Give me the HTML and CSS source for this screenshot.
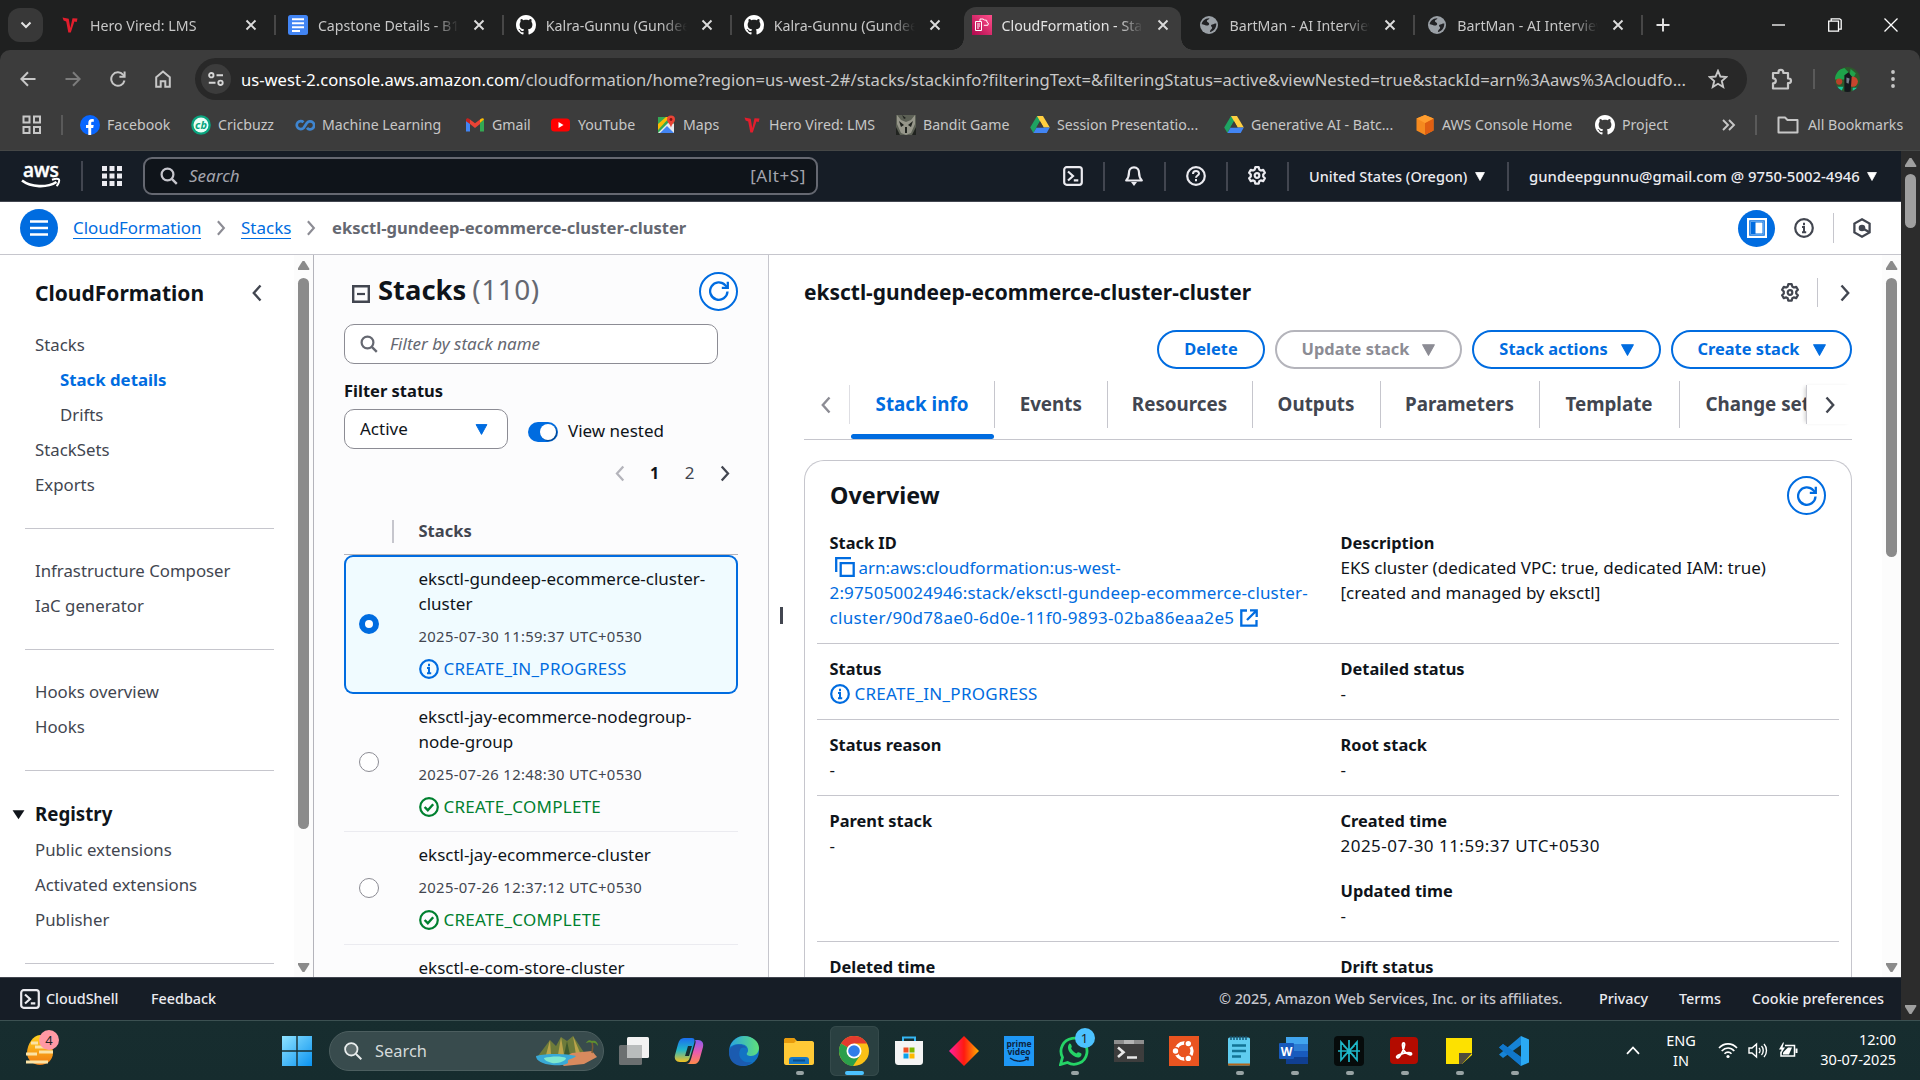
FILE: index.html
```html
<!DOCTYPE html>
<html lang="en">
<head>
<meta charset="utf-8">
<title>CloudFormation - Stack details</title>
<link rel="stylesheet" href="styles.css">
</head>
<body>
<svg class="defs" aria-hidden="true">
  <linearGradient id="g-cfn" x1="0" y1="1" x2="1" y2="0"><stop offset="0" stop-color="#b0084d"/><stop offset="1" stop-color="#ff4f8b"/></linearGradient>
  <linearGradient id="g-win" x1="0" y1="0" x2="1" y2="1"><stop offset="0" stop-color="#8fe3ff"/><stop offset="1" stop-color="#0a93f0"/></linearGradient>
  <linearGradient id="g-edge" x1="0" y1="0" x2="1" y2="0"><stop offset="0" stop-color="#2aa5e0"/><stop offset="1" stop-color="#5fe07a"/></linearGradient>
  <linearGradient id="g-egg" x1="0" y1="0" x2="0" y2="1"><stop offset="0" stop-color="#ffd21f"/><stop offset="1" stop-color="#f07a12"/></linearGradient>
  <linearGradient id="g-dia" x1="0" y1="0" x2="1" y2="0"><stop offset="0" stop-color="#ff1fa0"/><stop offset=".5" stop-color="#ff1a10"/><stop offset="1" stop-color="#ffb000"/></linearGradient>
  <linearGradient id="g-cop1" x1="0" y1="0" x2="0" y2="1"><stop offset="0" stop-color="#1a6df0"/><stop offset=".5" stop-color="#22b7c8"/><stop offset="1" stop-color="#f3c220"/></linearGradient>
  <linearGradient id="g-cop2" x1="0" y1="0" x2="0" y2="1"><stop offset="0" stop-color="#8a5cf0"/><stop offset=".5" stop-color="#e85bb0"/><stop offset="1" stop-color="#ff8a4a"/></linearGradient>
  <symbol id="x" viewBox="0 0 12 12"><path d="M1.5 1.5l9 9M10.5 1.5l-9 9" fill="none" stroke="currentColor" stroke-width="1.9"/></symbol>
  <symbol id="hero" viewBox="0 0 20 20"><path d="M2.5 2.6l6.2 1.2 1.6 9.2 2.2-9.8 5 .2-.8 3.6-2.3-.6-3.6 11.2H8.3L6.2 6.6 3.6 5.4z" fill="#e31e2d"/></symbol>
  <symbol id="docs" viewBox="0 0 20 20"><rect x="0" y="0" width="20" height="20" rx="2.5" fill="#4285f4"/><path d="M4 4.2h12M4 8.2h12M4 12.2h12M4 16h8" stroke="#fff" stroke-width="2"/></symbol>
  <symbol id="github" viewBox="0 0 16 16"><path fill="#fff" d="M8 0C3.58 0 0 3.58 0 8c0 3.54 2.29 6.53 5.47 7.59.4.07.55-.17.55-.38 0-.19-.01-.82-.01-1.49-2.01.37-2.53-.49-2.69-.94-.09-.23-.48-.94-.82-1.13-.28-.15-.68-.52-.01-.53.63-.01 1.08.58 1.23.82.72 1.21 1.87.87 2.33.66.07-.52.28-.87.51-1.07-1.78-.2-3.64-.89-3.64-3.95 0-.87.31-1.59.82-2.15-.08-.2-.36-1.02.08-2.12 0 0 .67-.21 2.2.82.64-.18 1.32-.27 2-.27s1.36.09 2 .27c1.53-1.04 2.2-.82 2.2-.82.44 1.1.16 1.92.08 2.12.51.56.82 1.27.82 2.15 0 3.07-1.87 3.75-3.65 3.95.29.25.54.73.54 1.48 0 1.07-.01 1.93-.01 2.2 0 .21.15.46.55.38A8.01 8.01 0 0 0 16 8c0-4.42-3.58-8-8-8z"/></symbol>
  <symbol id="globe" viewBox="0 0 20 20"><circle cx="10" cy="10" r="9" fill="#9aa0a6"/><path d="M10.5 3.2c-.6 1.6-2.6 1.2-2.6 2.8 0 1.4 1.8 1.2 2.2 2.4.5 1.4-1.3 2.6-3.2 2-1.6-.5-2.7-1.4-4.2-1.2.1-2.8 3.300-6.200 7.800-6z" fill="#202124"/><path d="M17.300 8.600c-1.600-.4-2.400.6-4 .8-1.200.2-1.700 1.300-.9 2.100.9.9 1.100 1.600.2 2.500-.9.8-1.600 1.500-1.700 3 3.700-.3 6.700-4.200 6.400-8.400z" fill="#202124"/></symbol>
  <symbol id="drive" viewBox="0 0 20 18"><path d="M7 0h6l-3.500 6.200L3.400 17 .2 11.500z" fill="#1ea362"/><path d="M7 0h6l6.800 11.500h-6.200z" fill="#ffcf40"/><path d="M6.600 11.500h13.200L16.700 17H3.400z" fill="#4285f4"/><path d="M10 5.200l3.700 6.300H6.300z" fill="#3c3c3c"/></symbol>
  <symbol id="search" viewBox="0 0 18 18"><circle cx="7.500" cy="7.500" r="5.900" fill="none" stroke="currentColor" stroke-width="2.200"/><path d="M11.800 11.800l5 5" stroke="currentColor" stroke-width="2.400"/></symbol>
  <symbol id="shell" viewBox="0 0 20 20"><rect x="1.200" y="1.200" width="17.600" height="17.600" rx="2.500" fill="none" stroke="currentColor" stroke-width="2.200"/><path d="M5 5.500l5 4.500-5 4.500M10.800 14.300h4.500" fill="none" stroke="currentColor" stroke-width="2.200"/></symbol>
  <symbol id="gear" viewBox="0 0 20 20"><path d="M8.300 1.200h3.400l.6 2.400 1.500.9 2.400-.7 1.700 2.900-1.700 1.800v1.900l1.700 1.800-1.700 2.900-2.400-.7-1.500.9-.6 2.400H8.300l-.6-2.400-1.500-.9-2.400.7-1.700-2.900 1.700-1.800V8.500L2.100 6.700l1.700-2.900 2.400.7 1.500-.9z" fill="none" stroke="currentColor" stroke-width="2.200" stroke-linejoin="round"/><circle cx="10" cy="9.500" r="2.300" fill="none" stroke="currentColor" stroke-width="2.200"/></symbol>
  <symbol id="caret" viewBox="0 0 12 11"><path d="M.6.600h10.800L6 10.400z" fill="currentColor" stroke="currentColor" stroke-linejoin="round"/></symbol>
  <symbol id="right" viewBox="0 0 10 18"><path d="M1.500 1.500L8.200 9l-6.700 7.500" fill="none" stroke="currentColor" stroke-width="2.400"/></symbol>
  <symbol id="left" viewBox="0 0 10 18"><path d="M8.500 1.500L1.800 9l6.700 7.500" fill="none" stroke="currentColor" stroke-width="2.400"/></symbol>
  <symbol id="info" viewBox="0 0 20 20"><circle cx="10" cy="10" r="8.800" fill="none" stroke="currentColor" stroke-width="2.200"/><path d="M10 4.800v2.400M8 9h2v5M8 14.200h4.200" fill="none" stroke="currentColor" stroke-width="2"/></symbol>
  <symbol id="check" viewBox="0 0 20 20"><circle cx="10" cy="10" r="8.800" fill="none" stroke="currentColor" stroke-width="2.200"/><path d="M5.600 10l3.200 3.200 5.400-6" fill="none" stroke="currentColor" stroke-width="2.400"/></symbol>
  <symbol id="refresh" viewBox="0 0 20 20"><path d="M18.500 10.500A8.700 8.700 0 1 1 16.300 4.300L18.600 6.500" fill="none" stroke="currentColor" stroke-width="2.300"/><path d="M18.800.8v6h-6" fill="none" stroke="currentColor" stroke-width="2.300"/></symbol>
</svg>

<header class="tabstrip">
  <button class="tabsearch"><svg viewBox="0 0 12 8"><path d="M1.500 1.500L6 6l4.500-4.500" fill="none" stroke="#e3e3e3" stroke-width="2"/></svg></button>
  <div class="tab sep"><svg class="fav"><use href="#hero"/></svg><span>Hero Vired: LMS</span><svg class="close"><use href="#x"/></svg></div>
  <div class="tab sep"><svg class="fav"><use href="#docs"/></svg><span>Capstone Details - B1</span><svg class="close"><use href="#x"/></svg></div>
  <div class="tab sep"><svg class="fav"><use href="#github"/></svg><span>Kalra-Gunnu (Gundee</span><svg class="close"><use href="#x"/></svg></div>
  <div class="tab"><svg class="fav"><use href="#github"/></svg><span>Kalra-Gunnu (Gundee</span><svg class="close"><use href="#x"/></svg></div>
  <div class="tab active"><svg class="fav" viewBox="0 0 20 20"><rect width="20" height="20" fill="url(#g-cfn)"/><path d="M3.500 6.500h6v9h-6zM5 9h3M5 11h3M5 13h2M8 6.500V4h3l1.500 1 2.200.3.300 2 1.400 1-.6 2h-4" fill="none" stroke="#fff" stroke-width="1"/></svg><span>CloudFormation - Sta</span><svg class="close"><use href="#x"/></svg></div>
  <div class="tab sep"><svg class="fav"><use href="#globe"/></svg><span>BartMan - AI Interview</span><svg class="close"><use href="#x"/></svg></div>
  <div class="tab sep"><svg class="fav"><use href="#globe"/></svg><span>BartMan - AI Interview</span><svg class="close"><use href="#x"/></svg></div>
  <svg class="plus" viewBox="0 0 14 14"><path d="M7 .5v13M.5 7h13" stroke="#e3e3e3" stroke-width="1.900"/></svg>
  <div class="winctl">
    <svg viewBox="0 0 14 14"><path d="M0 7h13" stroke="#fff" stroke-width="1.300"/></svg>
    <svg viewBox="0 0 14 14"><path d="M.7 3.200h9.800v10H.7zM3.200 3V.8h8.500l1.500 1.300v9h-2.400" fill="none" stroke="#fff" stroke-width="1.300"/></svg>
    <svg viewBox="0 0 14 14"><path d="M.5.500l13 13M13.500.500l-13 13" stroke="#fff" stroke-width="1.300"/></svg>
  </div>
</header>

<div class="toolbar">
  <div class="nav">
    <svg viewBox="0 0 16 16"><path d="M15.500 8H1.500M8 1.200L1.300 8 8 14.800" fill="none" stroke="#c7c7c7" stroke-width="2"/></svg>
    <svg viewBox="0 0 16 16"><path d="M.5 8h14M8 1.200L14.700 8 8 14.800" fill="none" stroke="#7c7c7c" stroke-width="2"/></svg>
    <svg viewBox="0 0 16 16"><path d="M14.500 9.500A6.700 6.700 0 1 1 13 3.600L14.600 5.200" fill="none" stroke="#c7c7c7" stroke-width="2"/><path d="M14.600.5v5.200H9.400" fill="none" stroke="#c7c7c7" stroke-width="2"/></svg>
    <svg viewBox="0 0 16 18"><path d="M1.200 7.200L8 1.500l6.800 5.700V16.800h-4.500v-5.600H5.700v5.600H1.200z" fill="none" stroke="#c7c7c7" stroke-width="2"/></svg>
  </div>
  <div class="omnibox">
    <span class="siteinfo"><svg viewBox="0 0 16 14"><g fill="none" stroke="#d6d6d6" stroke-width="1.900"><circle cx="3.300" cy="3.200" r="2.200"/><path d="M8.500 3.200H15M.8 10.800h6.700"/><circle cx="12.500" cy="10.800" r="2.200"/></g></svg></span>
    <span class="url"><b>us-west-2.console.aws.amazon.com</b>/cloudformation/home?region=us-west-2#/stacks/stackinfo?filteringText=&amp;filteringStatus=active&amp;viewNested=true&amp;stackId=arn%3Aaws%3Acloudfo...</span>
    <svg class="star" viewBox="0 0 20 20"><path d="M10 1.800l2.400 5.700 6 .5-4.600 4 1.400 6-5.200-3.200L4.800 18l1.400-6-4.600-4 6-.5z" fill="none" stroke="#c7c7c7" stroke-width="1.900"/></svg>
  </div>
  <svg class="puzzle" viewBox="0 0 22 22"><path d="M2 5h5.500V4.200a2.400 2.400 0 0 1 4.800 0V5H17v5.500h.7a2.300 2.300 0 0 1 0 4.600H17V20.500H2v-5.200c3.800 0 3.800-5 0-5z" fill="none" stroke="#c7c7c7" stroke-width="2.200" stroke-linejoin="round"/></svg>
  <i class="tsep"></i>
  <svg class="avatar" viewBox="0 0 24 24"><clipPath id="av"><circle cx="12" cy="12" r="12"/></clipPath><g clip-path="url(#av)"><rect width="24" height="24" fill="#2c5a2c"/><path d="M0 4l9-3 4 4-4 7H0zM15 2l5 4-2 4-4-2z" fill="#1fa34a"/><circle cx="17" cy="14" r="5" fill="#c8452e"/><circle cx="4" cy="14" r="3" fill="#b9402a"/><path d="M9 8l4-3 3 4-1 15H9z" fill="#15181d"/><path d="M11 10l3 1-1 5-2-1z" fill="#77808c"/><path d="M0 19h8l-2 5H0zM17 20h6v4h-6z" fill="#17c49a"/></g></svg>
  <svg class="dots" viewBox="0 0 4 18"><g fill="#c7c7c7"><circle cx="2" cy="2" r="1.900"/><circle cx="2" cy="9" r="1.900"/><circle cx="2" cy="16" r="1.900"/></g></svg>
</div>

<nav class="bookmarks">
  <svg viewBox="0 0 20 20"><path d="M1.500 1.500h6v6h-6zM12 1.500h6v6h-6zM1.500 12h6v6h-6zM12 12h6v6h-6z" fill="none" stroke="#c7c7c7" stroke-width="2"/></svg>
  <i class="tsep"></i>
  <div><svg viewBox="0 0 20 20"><circle cx="10" cy="10" r="10" fill="#0866ff"/><path d="M8.300 20v-7H6V10h2.300V8c0-2.600 1.400-4 3.700-4 .8 0 1.500.1 1.800.2v2.600h-1.300c-1 0-1.300.5-1.300 1.400V10h2.500l-.5 3h-2v7z" fill="#fff"/></svg>Facebook</div>
  <div><svg viewBox="0 0 20 20"><circle cx="10" cy="10" r="9.800" fill="#0aa57f"/><circle cx="10" cy="10" r="7.500" fill="#e9fff7"/><text x="10" y="13.800" text-anchor="middle" font-size="11" font-weight="700" font-style="italic" fill="#0aa57f">cb</text></svg>Cricbuzz</div>
  <div><svg viewBox="0 0 20 20"><g fill="none" stroke="#3f85cf" stroke-width="2.700"><path d="M8.500 7.200a4 4 0 1 0 .2 5.600L12 7.800a4 4 0 1 1 0 5"/></g></svg>Machine Learning</div>
  <div><svg viewBox="0 0 20 20"><path d="M1 4.500v12h4V8z" fill="#4285f4"/><path d="M19 4.500v12h-4V8z" fill="#34a853"/><path d="M15 8l4-3.500C18.600 2.800 17 3 16 3.700L15 4.500z" fill="#fbbc04"/><path d="M5 4.500L10 8.300l5-3.800V9l-5 3.900L5 9z" fill="#ea4335"/><path d="M1 5c0-2 2-2.200 3-1.300l1 .8V9L1 6.200z" fill="#c5221f"/></svg>Gmail</div>
  <div><svg viewBox="0 0 20 20"><rect x="0" y="3.500" width="19" height="13" rx="3.500" fill="#f00"/><path d="M7.500 7v6l5-3z" fill="#fff"/></svg>YouTube</div>
  <div><svg viewBox="0 0 20 20"><path d="M2 2h16v16H2z" fill="#34a853"/><path d="M2 18L14 6l4 3v9z" fill="#e8eaed"/><path d="M4 18l7-7 7 7z" fill="#4285f4"/><path d="M2 9l8-7h4L2 15z" fill="#fbbc04"/><path d="M15 .5a4 4 0 0 1 4 4c0 3-3 4-4 8-1-4-4-5-4-8a4 4 0 0 1 4-4z" fill="#ea4335"/><circle cx="15" cy="4.500" r="1.400" fill="#811411"/></svg>Maps</div>
  <div><svg><use href="#hero"/></svg>Hero Vired: LMS</div>
  <div><svg viewBox="0 0 20 20"><rect width="20" height="20" fill="#5c6055"/><path d="M1 0l4 5 5 2 5-2 4-5v9l-4 9-5 2-5-2-4-9z" fill="#96968a"/><path d="M3 6l5 4-3 2zM17 6l-5 4 3 2zM9 12h2v6H9zM0 12l4 8H0zM20 12l-4 8h4zM6 0l2 4 2-1zM14 0l-2 4z" fill="#20231f"/></svg>Bandit Game</div>
  <div><svg><use href="#drive"/></svg>Session Presentatio...</div>
  <div><svg><use href="#drive"/></svg>Generative AI - Batc...</div>
  <div><svg viewBox="0 0 20 20"><path d="M10 0l8.500 3.500v12L10 20l-8.500-4.500v-12z" fill="#f58a1f"/><path d="M10 8l8.500-4.500v12L10 20z" fill="#e05f12"/><path d="M10 0l8.500 3.500L10 8 1.500 3.500z" fill="#ff9d2e"/></svg>AWS Console Home</div>
  <div><svg><use href="#github"/></svg>Project</div>
  <svg class="more" viewBox="0 0 20 20"><path d="M3 5l5 5-5 5M9 5l5 5-5 5" fill="none" stroke="#c7c7c7" stroke-width="1.900"/></svg>
  <i class="tsep"></i>
  <div class="allbm"><svg viewBox="0 0 22 18"><path d="M1.500 1.500h6.500l2.500 2.500h10v12.500h-19z" fill="none" stroke="#c7c7c7" stroke-width="2" stroke-linejoin="round"/></svg>All Bookmarks</div>
</nav>

<div class="page">
  <div class="console">
    <header class="awsnav">
      <svg class="awslogo" viewBox="0 0 42 28"><text x="21" y="14.500" text-anchor="middle" textLength="36" lengthAdjust="spacingAndGlyphs" font-size="20" font-weight="500" stroke="#fff" stroke-width=".5" fill="#fff">aws</text><path d="M2 18.500c9 7 25 7.500 34.500 1.500" fill="none" stroke="#fff" stroke-width="2.600"/><path d="M32 17.800c3-1.200 6-1.300 7-.4.700 1.200-.4 4.600-2.400 6.800" fill="none" stroke="#fff" stroke-width="2"/></svg>
      <i></i>
      <svg class="apps" viewBox="0 0 20 20"><path d="M0 0h5v5H0zM7.500 0h5v5h-5zM15 0h5v5h-5zM0 7.500h5v5H0zM7.500 7.500h5v5h-5zM15 7.500h5v5h-5zM0 15h5v5H0zM7.500 15h5v5h-5zM15 15h5v5h-5z" fill="#ebebf0"/></svg>
      <div class="awssearch"><svg><use href="#search"/></svg><em>Search</em><span>[Alt+S]</span></div>
      <div class="awsright">
        <div><svg><use href="#shell"/></svg></div>
        <div><svg viewBox="0 0 20 20"><path d="M10 1.300c-3.300 0-5 2.500-5 5.200 0 4-1 6-2.800 8h15.600c-1.800-2-2.800-4-2.800-8 0-2.700-1.700-5.200-5-5.200z" fill="none" stroke="currentColor" stroke-width="2.200" stroke-linejoin="round"/><path d="M7 16h6l-3 4z" fill="currentColor"/></svg></div>
        <div><svg viewBox="0 0 20 20"><circle cx="10" cy="10" r="8.800" fill="none" stroke="currentColor" stroke-width="2.200"/><path d="M7 8c0-4 6-3.800 6-.5 0 2-3 2-3 4.200M10 13v2.200" fill="none" stroke="currentColor" stroke-width="2"/></svg></div>
        <div><svg><use href="#gear"/></svg></div>
        <div class="region"><span>United States (Oregon)</span><svg class="caret"><use href="#caret"/></svg></div>
        <div class="account"><span>gundeepgunnu@gmail.com @ 9750-5002-4946</span><svg class="caret"><use href="#caret"/></svg></div>
      </div>
    </header>

    <div class="crumbs">
      <button class="menu"><svg viewBox="0 0 18 18"><path d="M0 2.500h18M0 9h18M0 15.500h18" stroke="#fff" stroke-width="2.500"/></svg></button>
      <a class="c1">CloudFormation</a><svg class="chev"><use href="#right"/></svg>
      <a class="c2">Stacks</a><svg class="chev"><use href="#right"/></svg>
      <b>eksctl-gundeep-ecommerce-cluster-cluster</b>
      <div class="tools">
        <button><svg viewBox="0 0 20 20"><path d="M1.100 1.100h17.800v17.800H1.100z" fill="none" stroke="#fff" stroke-width="2.200"/><path d="M3.500 3.500h13v13h-13z" fill="none" stroke="#5aa2ee" stroke-width="1"/><path d="M8.500 4.500h7v11h-7z" fill="#fff"/></svg></button>
        <svg class="t-info"><use href="#info"/></svg>
        <i></i>
        <svg class="t-hex" viewBox="0 0 20 20"><path d="M10 1.300l7.600 4.300v8.800L10 18.700l-7.600-4.300V5.600z" fill="none" stroke="currentColor" stroke-width="2.300"/><path d="M17.500 14.200L10 10" stroke="currentColor" stroke-width="2.300"/><circle cx="10" cy="10" r="3.300" fill="currentColor"/></svg>
      </div>
    </div>

    <div class="cols">
      <aside class="side">
        <div class="sidebody">
          <h2>CloudFormation<svg><use href="#left"/></svg></h2>
          <a>Stacks</a><a class="sub on">Stack details</a><a class="sub">Drifts</a><a>StackSets</a><a>Exports</a>
          <hr>
          <a>Infrastructure Composer</a><a>IaC generator</a>
          <hr>
          <a>Hooks overview</a><a>Hooks</a>
          <hr>
          <h3><svg viewBox="0 0 14 11"><path d="M.6 1h12.800L7 10.500z" fill="#0f141a"/></svg>Registry</h3>
          <a>Public extensions</a><a>Activated extensions</a><a>Publisher</a>
          <hr>
        </div>
        <div class="sbar s-side"><b class="up"></b><i></i><b class="dn"></b></div>
      </aside>

      <section class="stacks">
        <div class="shead">
          <svg class="minus" viewBox="0 0 18 18"><path d="M1.200 1.200h15.600v15.600H1.200z" fill="none" stroke="#424650" stroke-width="2.400"/><path d="M5 9h8" stroke="#424650" stroke-width="2.200"/></svg>
          <h1>Stacks</h1><span>(110)</span>
          <button class="round"><svg><use href="#refresh"/></svg></button>
        </div>
        <div class="filter"><svg><use href="#search"/></svg><em>Filter by stack name</em></div>
        <div class="flabel">Filter status</div>
        <div class="frow"><div class="select"><span>Active</span><svg><use href="#caret"/></svg></div><i class="toggle"></i><span class="vn">View nested</span></div>
        <div class="pager"><svg class="off"><use href="#left"/></svg><b>1</b><span>2</span><svg><use href="#right"/></svg></div>
        <div class="thead"><b>Stacks</b></div>
        <div class="row sel"><i></i><div><p>eksctl-gundeep-ecommerce-cluster-<br>cluster</p><time>2025-07-30 11:59:37 UTC+0530</time><p class="prog"><svg><use href="#info"/></svg>CREATE_IN_PROGRESS</p></div></div>
        <div class="row"><i></i><div><p>eksctl-jay-ecommerce-nodegroup-<br>node-group</p><time>2025-07-26 12:48:30 UTC+0530</time><p class="done"><svg><use href="#check"/></svg>CREATE_COMPLETE</p></div></div>
        <div class="row"><i></i><div><p>eksctl-jay-ecommerce-cluster</p><time>2025-07-26 12:37:12 UTC+0530</time><p class="done"><svg><use href="#check"/></svg>CREATE_COMPLETE</p></div></div>
        <div class="row last"><div><p>eksctl-e-com-store-cluster</p></div></div>
      </section>

      <main class="detail">
        <div class="grip"><i></i></div>
        <div class="dbody">
          <div class="dhead"><h2>eksctl-gundeep-ecommerce-cluster-cluster</h2><svg class="cog"><use href="#gear"/></svg><i></i><svg class="chev"><use href="#right"/></svg></div>
          <div class="actions">
            <button>Delete</button>
            <button class="dis">Update stack<svg><use href="#caret"/></svg></button>
            <button>Stack actions<svg><use href="#caret"/></svg></button>
            <button>Create stack<svg><use href="#caret"/></svg></button>
          </div>
          <div class="tabs">
            <span class="tl"><svg><use href="#left"/></svg></span>
            <b class="on">Stack info</b><b>Events</b><b>Resources</b><b>Outputs</b><b>Parameters</b><b>Template</b><b class="cut">Change sets</b>
            <span class="tr"><svg><use href="#right"/></svg></span>
          </div>
          <div class="card">
            <div class="chead"><h3>Overview</h3><button class="round"><svg><use href="#refresh"/></svg></button></div>
            <div class="kv first">
              <div><b>Stack ID</b><p class="link"><svg class="copy" viewBox="0 0 20 20"><path d="M1.200 15V1.200H16" fill="none" stroke="currentColor" stroke-width="2.300"/><path d="M5.700 6.200h13v12.600h-13z" fill="none" stroke="currentColor" stroke-width="2.300"/></svg>arn:aws:cloudformation:us-west-<br><span class="arn2">2:975050024946:stack/eksctl-gundeep-ecommerce-cluster-</span><br><span class="arn3">cluster/90d78ae0-6d0e-11f0-9893-02ba86eaa2e5</span><svg class="ext" viewBox="0 0 18 18"><path d="M7 1.500H1.300v15.200h15.200V11" fill="none" stroke="currentColor" stroke-width="2.300"/><path d="M10 1.300h6.700V8M16.500 1.500L7 11" fill="none" stroke="currentColor" stroke-width="2.300"/></svg></p></div>
              <div><b>Description</b><p>EKS cluster (dedicated VPC: true, dedicated IAM: true)<br>[created and managed by eksctl]</p></div>
            </div>
            <div class="kv"><div><b>Status</b><p class="prog"><svg><use href="#info"/></svg>CREATE_IN_PROGRESS</p></div><div><b>Detailed status</b><p>-</p></div></div>
            <div class="kv"><div><b>Status reason</b><p>-</p></div><div><b>Root stack</b><p>-</p></div></div>
            <div class="kv"><div><b>Parent stack</b><p>-</p></div><div><b>Created time</b><p class="stamp">2025-07-30 11:59:37 UTC+0530</p><b class="second">Updated time</b><p>-</p></div></div>
            <div class="kv"><div><b>Deleted time</b></div><div><b>Drift status</b></div></div>
          </div>
        </div>
        <div class="sbar s-main"><b class="up"></b><i></i><b class="dn"></b></div>
      </main>
    </div>

    <footer class="foot">
      <svg><use href="#shell"/></svg><span class="f1">CloudShell</span><span class="f2">Feedback</span>
      <span class="f3">© 2025, Amazon Web Services, Inc. or its affiliates.</span><span class="f4">Privacy</span><span class="f5">Terms</span><span class="f6">Cookie preferences</span>
    </footer>
  </div>
  <div class="sbar s-page"><b class="up"></b><i></i><b class="dn"></b></div>
</div>

<div class="taskbar">
  <div class="widget"><svg viewBox="0 0 28 30"><path d="M14 0c7 0 13 10 13 18 0 7-6 12-13 12S1 25 1 18C1 10 7 0 14 0z" fill="url(#g-egg)"/><path d="M5 8h7M9 12h14M0 19h11M13 17h14M0 27h22" stroke="#fbe3a6" stroke-width="3"/></svg><span class="badge pink">4</span></div>
  <div class="slot win"><svg viewBox="0 0 30 30"><path d="M0 0h14.300v14.300H0zM15.700 0H30v14.300H15.700zM0 15.700h14.300V30H0zM15.700 15.700H30V30H15.700z" fill="url(#g-win)"/></svg></div>
  <div class="tsearch"><svg class="mag" viewBox="0 0 18 18"><circle cx="7.300" cy="7.300" r="6.200" fill="#5e6d6e" stroke="#e9eded" stroke-width="1.800"/><path d="M12 12l5.300 5.300" stroke="#e9eded" stroke-width="2"/></svg><span>Search</span>
    <svg class="scene" viewBox="0 0 62 30"><path d="M2 20L14 4l6 6 5-9 6 4 6-5 12 18-8 4z" fill="#6d7b3a"/><path d="M14 4l-4 15h5zM25 1l-3 18h6zM37 0l3 19h5z" fill="#b9a34a"/><path d="M31 5l3 14h-6z" fill="#3f5a2d"/><path d="M36 17l20-2 5 6-13 7-20 2-6-5z" fill="#d88a5e"/><path d="M0 20c12-3 32-2 40 0-2 3-10 3-8 6 1 2-6 4-16 3C7 28 0 25 0 20z" fill="#39a9d6"/><path d="M8 22c8-2 18-2 22 0 0 3-8 6-14 5-4-1-8-3-8-5z" fill="#7ee8cf"/><path d="M56 17c1-5 1-8 0-12" stroke="#7a5a33" stroke-width="1.500" fill="none"/><path d="M56 5c-3-2-5 0-6 2 3-1 4-1 6 0 2-1 4 0 6 3 0-4-3-6-6-5z" fill="#5f8f2e"/></svg></div>
  <div class="slot"><svg viewBox="0 0 30 30"><rect x="8" y="1" width="22" height="21" rx="1.500" fill="#f2f2f2"/><rect x="0" y="9" width="23" height="20" rx="1.500" fill="#6b6f70"/><rect x="8" y="9" width="15" height="13" fill="#b9bcbc"/></svg></div>
  <div class="slot"><svg viewBox="0 0 30 30"><path d="M10 2h8c3 0 3 3 2 6l-4 13c-1 4-3 5-6 5H6c-4 0-6-3-5-7l3-11c1-4 3-6 6-6z" fill="url(#g-cop1)"/><path d="M20 4h4c4 0 6 3 5 7l-3 11c-1 4-3 6-6 6h-8c3 0 4-2 5-5l4-14c1-3 1-5-1-5z" fill="url(#g-cop2)"/><path d="M14 10h4l-3 10h-4z" fill="#162d2f"/></svg></div>
  <div class="slot"><svg viewBox="0 0 30 30"><circle cx="15" cy="15" r="15" fill="#1273c4"/><path d="M1 11C3 4 9 0 15 0c9 0 15 6 15 12 0 5-4 8-8 8-3 0-5-1-4-3 1-1 1-2 1-3 0-4-4-6-8-6-4-.5-8 1-10 3z" fill="url(#g-edge)"/><path d="M11 14c-3 7 3 14 12 12-4 4-10 5-15 3-5-2-8-7-8-12 0-6 6-9 11-8 4 0 6 2 7 4-2-2-6-2-7 1z" fill="#1b5bb0"/></svg></div>
  <div class="slot dot"><svg viewBox="0 0 30 30"><path d="M0 4c0-1 1-2 2-2h8l3 3h15c1 0 2 1 2 2v20c0 1-1 2-2 2H2c-1 0-2-1-2-2z" fill="#ffc936"/><path d="M0 7V4c0-1 1-2 2-2h8l2 3-2 2z" fill="#e79a0c"/><path d="M5 28v-4c0-2 1-3 3-3h14c2 0 3 1 3 3v4z" fill="#1578c8"/><path d="M9 24.500h12" stroke="#0b4f8e" stroke-width="2"/></svg></div>
  <div class="slot cur"><svg viewBox="0 0 30 30"><circle cx="15" cy="15" r="15" fill="#fbc116"/><path d="M15 15L2 7.500A15 15 0 0 1 28 7.500H15z" fill="#e33b2e"/><path d="M15 15L2 7.500A15 15 0 0 0 14 30L21.500 18.800z" fill="#2b9f4b"/><circle cx="15" cy="15" r="7.500" fill="#fff"/><circle cx="15" cy="15" r="5.800" fill="#2f7de9"/></svg></div>
  <div class="slot"><svg viewBox="0 0 30 30"><path d="M9 6V1.500h12V6" fill="none" stroke="#35b5f2" stroke-width="2"/><path d="M1 5h28v20c0 3-1 4-4 4H5c-3 0-4-1-4-4z" fill="#f4f4f4"/><path d="M9.500 11.500h5v5h-5z" fill="#f04f23"/><path d="M15.500 11.500h5v5h-5z" fill="#7db700"/><path d="M9.500 17.500h5v5h-5z" fill="#0aa2ed"/><path d="M15.500 17.500h5v5h-5z" fill="#fdb900"/></svg></div>
  <div class="slot"><svg viewBox="0 0 30 30"><path d="M15 0l15 15-15 15L0 15z" fill="url(#g-dia)"/></svg></div>
  <div class="slot"><svg viewBox="0 0 30 30"><rect width="30" height="30" fill="#1e97f5"/><text x="15" y="10.500" text-anchor="middle" font-size="8.500" font-weight="700" fill="#0d2340">prime</text><text x="15" y="19" text-anchor="middle" font-size="8.500" font-weight="700" fill="#0d2340">video</text><path d="M6 22c5 4 13 4 17 1M21 21.500h3v3" fill="none" stroke="#0d2340" stroke-width="1.500"/></svg></div>
  <div class="slot dot"><svg viewBox="0 0 30 30"><path d="M1.500 28.500l2-7.200A13 13 0 1 1 8.500 26.500z" fill="#162d2f" stroke="#25d366" stroke-width="2.800"/><path d="M10 8c1-1 2 0 2.500 1.500.5 1.500.5 1.500-.5 2.500 1 2.500 3 4.500 5.500 5.500 1.500-2 2-1.500 4-.5 1.500.5 1 2 .5 3-2 2.500-5 1.500-8-.5-3-2-7-7-4-11.500z" fill="#25d366"/></svg><span class="badge blue">1</span></div>
  <div class="slot"><svg viewBox="0 0 30 30"><path d="M0 4h30v22H0z" fill="#3d3d3d"/><path d="M0 4h30v4H0z" fill="#8e8e8e"/><path d="M10 4h10v4H10z" fill="#b5b5b5"/><path d="M4 11.500l5.500 4.700L4 21M13 21.500h10" fill="none" stroke="#e8e8e8" stroke-width="2.600"/></svg></div>
  <div class="slot"><svg viewBox="0 0 30 30"><rect width="30" height="30" fill="#e95420"/><circle cx="15" cy="15" r="8" fill="none" stroke="#fff" stroke-width="3.300"/><g fill="#fff" stroke="#e95420" stroke-width="1.600"><circle cx="6.500" cy="15" r="3.500"/><circle cx="19.300" cy="7.600" r="3.500"/><circle cx="19.300" cy="22.400" r="3.500"/></g></svg></div>
  <div class="slot dot"><svg viewBox="0 0 30 30"><rect x="4" y="1.500" width="22" height="28" rx="1.500" fill="#5fcdf0"/><path d="M4 27.500h22v2H4z" fill="#b5651a"/><path d="M7 0v4M10 0v4M13 0v4M16 0v4M19 0v4M22 0v4" stroke="#15506e" stroke-width="1.400"/><path d="M8 9.500h14M8 15h14M8 20.500h9" stroke="#127394" stroke-width="2.500"/></svg></div>
  <div class="slot dot"><svg viewBox="0 0 30 30"><path d="M7 1h22v9H7z" fill="#41a5ee"/><path d="M7 8h22v7H7z" fill="#2b7cd3"/><path d="M7 15h22v7H7z" fill="#185abd"/><path d="M7 21h22v7H7z" fill="#103f91"/><rect x="0" y="7" width="15" height="16" rx="1" fill="#185abd"/><text x="7.500" y="19.500" text-anchor="middle" font-size="12" font-weight="700" fill="#fff">W</text></svg></div>
  <div class="slot dot"><svg viewBox="0 0 30 30"><rect width="30" height="30" rx="4" fill="#060b0b"/><path d="M15 4v22M7 6l8 9 8-9v18l-8-9-8 9zM4 15h22M9.500 9.500L15 15l5.500-5.500M9.500 20.500L15 15l5.500 5.500" fill="none" stroke="#1fb8c9" stroke-width="1.700"/></svg></div>
  <div class="slot dot"><svg viewBox="0 0 30 30"><rect x="1" y="1" width="28" height="27" rx="4" fill="#b30b00"/><path d="M8 21.500c-2-1.500 5-4.500 12-4.800 3.500 0 3 2.500.5 2-4-1-7-5-7-9.500 0-3 2.500-3 2 0-.6 4-3.500 9.500-5.500 12-.8.800-1.500.8-2 .3z" fill="none" stroke="#fff" stroke-width="1.800"/></svg></div>
  <div class="slot dot"><svg viewBox="0 0 30 30"><path d="M2 2h26v17L18 28H2z" fill="#fde100"/><path d="M28 17L18 28h-3V17z" fill="#4f4b3c"/></svg></div>
  <div class="slot dot"><svg viewBox="0 0 30 30"><path d="M22 0l8 3.500v23L22 30z" fill="#2aa9f3"/><path d="M22 0v9L4 22l-4-3.500z" fill="#1684d6"/><path d="M22 30v-9L4 8l-4 3.500z" fill="#0f6fc0"/><path d="M0 11.500L4 8l18 13v9z" fill="#1177cb"/></svg></div>
  <div class="tray">
    <svg class="upc" viewBox="0 0 14 9"><path d="M1 7.800l6-6.300 6 6.300" fill="none" stroke="#fff" stroke-width="1.800"/></svg>
    <div class="lang">ENG<br>IN</div>
    <svg class="ic wifi" viewBox="0 0 20 16"><g fill="none" stroke="#fff" stroke-width="1.600"><path d="M1 5.500c5-5.500 13-5.500 18 0M3.700 8.500c3.700-4 9-4 12.600 0M6.500 11.300c2-2.200 5-2.200 7 0"/></g><circle cx="10" cy="14" r="1.600" fill="#fff"/></svg>
    <svg class="ic" viewBox="0 0 20 16"><g fill="none" stroke="#fff" stroke-width="1.400"><path d="M1 5.500h3L8.500 1.500v13L4 10.500H1zM11 5.500c1.300 1.300 1.300 3.700 0 5M13.500 3.500c2.300 2.300 2.300 6.700 0 9M16 1.500c3.300 3.500 3.300 9.500 0 13"/></g></svg>
    <svg class="ic" viewBox="0 0 20 16"><path d="M7 3h9.500v10.500H3V9" fill="none" stroke="#fff" stroke-width="1.500"/><path d="M18.500 6v4.500" stroke="#fff" stroke-width="2"/><path d="M10 5h4l-3 7H5v-2z" fill="#fff"/><path d="M5 0L1 7h2.500l-1 5L7 5H4.500L6 0z" fill="#fff"/></svg>
    <div class="clock">12:00<br>30-07-2025</div>
  </div>
</div>
</body>
</html>
```
FILE: styles.css
```css
* { box-sizing: border-box; }
body { margin: 0; width: 1920px; height: 1080px; overflow: hidden; font-family: "Noto Sans", sans-serif; font-size: 17px; color: #0f141a; background: #fff; display: flex; flex-direction: column; }
h1, h2, h3, p { margin: 0; }
button { font: inherit; border: 0; padding: 0; margin: 0; background: none; display: flex; align-items: center; justify-content: center; flex: none; }
svg { flex: none; display: block; }
.defs { width: 0; height: 0; position: absolute; }

/* Browser tab strip */
.tabstrip { height: 50px; background: #1f2020; display: flex; align-items: center; flex: none; padding-left: 8px; font-size: 14.2px; color: #c7c7c7; }
.tabsearch { width: 35px; height: 34px; border-radius: 12px; background: #383838; margin-right: 4px; }
.tabsearch svg { width: 12px; height: 8px; }
.tab { width: 227.9px; height: 43px; margin-top: 7px; padding-bottom: 7px; display: flex; align-items: center; flex: none; position: relative; padding-left: 13px; }
.tab .fav { width: 20px; height: 20px; margin-right: 10px; }
.tab span { width: 141px; overflow: hidden; white-space: nowrap; position: relative; -webkit-mask-image: linear-gradient(90deg, #000 82%, transparent); mask-image: linear-gradient(90deg, #000 82%, transparent); z-index: 1; }
.tab .close { width: 12px; height: 12px; margin-left: 14px; color: #dcdcdc; z-index: 1; }
.tab .fav { z-index: 1; }
.tab.sep::after { content: ""; position: absolute; right: -1px; top: 8px; width: 2px; height: 20px; background: #474747; }
.tab.active { color: #e3e3e3; }
.tab.active::before { content: ""; position: absolute; left: 5px; right: 5px; top: 0; bottom: 0; background: #3c3c3c; border-radius: 12px 12px 0 0; }
.tab.active::after { content: ""; position: absolute; left: -7px; right: -7px; bottom: 0; height: 12px; background: radial-gradient(circle at 0 0, transparent 11.5px, #3c3c3c 12px) 0 0 / 12px 12px no-repeat, radial-gradient(circle at 100% 0, transparent 11.5px, #3c3c3c 12px) 100% 0 / 12px 12px no-repeat; }
.plus { width: 14px; height: 14px; margin-left: 14px; }
.winctl { margin-left: auto; display: flex; gap: 42px; padding-right: 22px; }
.winctl svg { width: 14px; height: 14px; }

/* Address bar */
.toolbar { height: 50px; background: #3c3c3c; flex: none; display: flex; align-items: center; padding-top: 8px; position: relative; border-radius: 10px 10px 0 0; box-shadow: 0 -10px #1f2020; z-index: 0; }
.tabstrip { z-index: 1; }
.nav { display: flex; gap: 29px; padding-left: 20px; width: 195px; }
.nav svg { width: 16px; height: 18px; margin-top: -1px; }
.omnibox { width: 1552px; height: 42px; border-radius: 21px; background: #282828; display: flex; align-items: center; padding-left: 6px; }
.siteinfo { width: 30px; height: 30px; border-radius: 50%; background: #3c3c3c; display: flex; align-items: center; justify-content: center; }
.siteinfo svg { width: 16px; height: 14px; }
.url { margin-left: 10px; width: 1464px; white-space: nowrap; color: #c7c7c7; font-size: 16.6px; }
.url b { font-weight: 400; color: #fff; }
.star { width: 20px; height: 20px; margin-left: 3px; }
.puzzle { width: 22px; height: 22px; margin-left: 24px; }
.tsep { width: 2px; height: 20px; background: #5a5a5a; }
.toolbar .tsep { margin-left: 20px; }
.avatar { width: 25px; height: 25px; margin-left: 20px; }
.dots { width: 4px; height: 18px; margin-left: 31px; }

/* Bookmarks bar */
.bookmarks { height: 51px; background: #3c3c3c; flex: none; display: grid; grid-template-columns: 39px 19px 111px 104px 170px 86px 105px 86px 154px 134px 194px 191px 180px 125px 35px 22px 1fr; align-items: center; padding-left: 22px; padding-bottom: 1px; font-size: 14.15px; color: #c7c7c7; border-bottom: 1px solid #454746; white-space: nowrap; }
.bookmarks svg { width: 20px; height: 20px; }
.bookmarks div { display: flex; align-items: center; gap: 7px; }
.bookmarks .allbm { gap: 9px; }
.bookmarks .allbm svg { width: 22px; height: 18px; }

/* Page frame */
.page { height: 869px; display: flex; flex: none; }
.console { width: 1901px; display: flex; flex-direction: column; height: 869px; }

/* Scrollbars */
.sbar { width: 19px; display: flex; flex-direction: column; align-items: center; flex: none; background: #fcfcfc; }
.sbar i { width: 11px; border-radius: 6px; background: #8b8b8b; }
.sbar b { width: 12px; height: 9px; background: #8b8b8b; }
.sbar .up { clip-path: polygon(42% 0, 58% 0, 100% 90%, 96% 100%, 4% 100%, 0 90%); }
.sbar .dn { clip-path: polygon(4% 0, 96% 0, 100% 10%, 58% 100%, 42% 100%, 0 10%); margin-top: auto; }
.s-side { padding: 6px 0 5px; }
.s-side i { height: 551px; margin-top: 8px; }
.s-main { padding: 6px 0 5px; }
.s-main i { height: 279px; margin-top: 8px; }
.s-page { background: #2c2c2c; padding: 7px 0 6px; }
.s-page i, .s-page b { background: #9f9f9f; }
.s-page i { height: 54px; margin-top: 7px; }

/* AWS top navigation */
.awsnav { height: 51px; background: #161d26; border-bottom: 1px solid #424650; display: flex; align-items: center; flex: none; color: #ebebf0; }
.awslogo { width: 42px; height: 28px; margin-left: 20px; }
.awsnav > i { width: 2px; height: 30px; background: #424650; margin-left: 19px; }
.apps { width: 20px; height: 20px; margin-left: 19px; }
.awssearch { width: 675px; height: 38px; margin-left: 21px; border: 2px solid #656871; border-radius: 9px; background: #0f141a; display: flex; align-items: center; padding: 0 10px 2px 15px; font-size: 17px; color: #a4a4ad; }
.awssearch svg { width: 18px; height: 18px; margin: 2px 11px 0 0; color: #c6c6cd; }
.awssearch span { margin-left: auto; letter-spacing: .6px; }
.awsright { display: flex; margin-left: auto; align-items: center; font-size: 14.900px; font-weight: 500; }
.awsright > div { width: 61.5px; height: 29px; display: flex; align-items: center; justify-content: center; border-right: 2px solid #424650; }
.awsright svg { width: 20px; height: 20px; }
.awsright .caret { width: 10px; height: 9px; color: #fff; }
.awsright .region { width: 220px; justify-content: flex-start; padding-left: 20px; }
.awsright .account { width: 392px; border: 0; justify-content: flex-start; padding-left: 20px; }
.region span { width: 166px; white-space: nowrap; font-size: 14.500px; }
.account span { width: 338px; white-space: nowrap; }

/* Breadcrumbs */
.crumbs { height: 53px; border-bottom: 1px solid #c6c6cd; display: flex; align-items: center; flex: none; padding-left: 20px; background: #fff; }
.menu { width: 38px; height: 38px; border-radius: 50%; background: #006ce0; }
.menu svg { width: 18px; height: 18px; }
.crumbs a { color: #006ce0; border-bottom: 1.500px solid #006ce0; line-height: 21px; white-space: nowrap; }
.c1 { margin-left: 15px; width: 128px; font-size: 16.900px; }
.c2 { width: 50px; }
.crumbs .chev { width: 10px; height: 16px; color: #8c8c94; margin: 0 15px; }
.crumbs b { color: #656871; font-size: 16.600px; padding-bottom: 2px; margin-left: 1px; }
.tools { margin-left: auto; display: flex; align-items: center; color: #424650; }
.tools button { width: 37px; height: 37px; border-radius: 50%; background: #006ce0; }
.tools svg { width: 20px; height: 20px; }
.tools .t-info { margin-left: 19px; }
.tools i { width: 1px; height: 30px; background: #c6c6cd; margin: 0 18px 0 19px; }
.tools .t-hex { margin-right: 29px; }

.cols { height: 722px; display: flex; flex: none; overflow: hidden; }

/* Side navigation */
.side { width: 314px; border-right: 1px solid #b4b4bb; display: flex; background: #fff; }
.sidebody { width: 294px; padding: 11px 20px 0 25px; color: #424650; }
.side h2 { font-size: 21px; line-height: 54px; margin-bottom: 7px; color: #0f141a; padding-left: 10px; display: flex; align-items: center; justify-content: space-between; }
.side h2 svg { width: 10px; height: 18px; margin-right: 12px; color: #424650; }
.side a { display: block; line-height: 35px; padding-left: 10px; font-size: 16.800px; }
.side .sub { padding-left: 35px; }
.side .on { color: #006ce0; font-weight: 700; }
.side hr { border: 0; height: 1px; background: #c6c6cd; margin: 26px 0 24px; }
.side h3 { font-size: 18.700px; line-height: 36px; margin-top: 25px; color: #0f141a; display: flex; align-items: center; margin-left: -13px; }
.side h3 svg { width: 13px; height: 11px; margin-right: 10px; }

/* Stack list */
.stacks { width: 455px; background: #fcfcfd; border-right: 1px solid #c6c6cd; padding: 0 30px; }
.shead { height: 69px; display: flex; align-items: center; padding-left: 8px; padding-top: 3px; }
.minus { width: 18px; height: 18px; margin: 6px 8px 0 0; }
.shead h1 { font-size: 27.400px; margin-top: -4px; }
.shead span { font-size: 28px; letter-spacing: .5px; color: #656871; margin: -4px 0 0 6px; }
.round { width: 39px; height: 39px; border-radius: 50%; border: 2px solid #006ce0; color: #006ce0; margin-left: auto; background: #fff; }
.round svg { width: 20px; height: 20px; }
.filter { width: 374px; height: 40px; border: 1px solid #8c8c94; border-radius: 10px; background: #fff; display: flex; align-items: center; padding-left: 15px; color: #656871; }
.filter svg { width: 18px; height: 18px; margin-right: 12px; }
.filter em { padding-bottom: 2px; }
.flabel { height: 45px; padding-top: 14px; line-height: 25px; font-weight: 700; font-size: 16.500px; }
.frow { display: flex; align-items: center; height: 40px; }
.select { width: 164px; height: 40px; border: 1px solid #8c8c94; border-radius: 10px; background: #fff; display: flex; align-items: center; justify-content: space-between; padding: 0 19px 0 15px; }
.select svg { width: 13px; height: 11px; color: #006ce0; }
.select span { padding-bottom: 2px; }
.toggle { width: 30px; height: 20px; border-radius: 10px; background: #006ce0; margin: 5px 10px 0 20px; display: flex; justify-content: flex-end; padding: 2px; }
.toggle::after { content: ""; width: 16px; height: 16px; border-radius: 50%; background: #fff; box-shadow: 1px 1px 1px #0006; }
.vn { margin-top: 3px; }
.pager { height: 48px; display: flex; align-items: center; justify-content: flex-end; padding-right: 8px; color: #424650; }
.pager svg { width: 10px; height: 17px; }
.pager .off { color: #b4b4bb; }
.pager b, .pager span { width: 35px; text-align: center; padding-bottom: 1px; }
.pager svg:last-child { margin-left: 13px; }
.pager .off { margin-right: 12px; }
.pager b { color: #0f141a; font-size: 16px; }
.thead { height: 58px; border-bottom: 1px solid #b4b4bb; padding: 23px 0 0 48px; color: #424650; }
.thead b { display: block; border-left: 2px solid #c6c6cd; padding-left: 24.500px; height: 23px; line-height: 22px; font-size: 16.500px; }
.row { display: flex; padding: 9.500px 0 13.500px 74.500px; position: relative; box-shadow: inset 0 -1px #ebebf0; }
.row > i { position: absolute; left: 15px; top: calc(50% - 11px); width: 20px; height: 20px; border-radius: 50%; border: 1px solid #8c8c94; background: #fff; }
.row p { line-height: 25px; white-space: nowrap; }
.row time { display: block; font-size: 14.800px; letter-spacing: .34px; line-height: 20px; margin: 10.500px 0 9.500px; color: #424650; }
.row svg, .kv .prog svg { width: 20px; height: 20px; margin-top: 2px; }
.prog, .done { display: flex; align-items: center; gap: 5px; color: #006ce0; letter-spacing: .27px; }
.done { color: #00802f; }
.row.sel { background: #f0fbff; box-shadow: inset 0 0 0 2px #006ce0; border-radius: 9px; padding-top: 10.500px; }
.row.sel > i { border: 6px solid #006ce0; }
.row.last { box-shadow: none; }

/* Detail pane */
.detail { width: 1132px; display: flex; background: #fff; }
.grip { width: 35px; padding: 352px 0 0 11px; }
.grip i { display: block; width: 3px; height: 17px; background: #424650; }
.dbody { width: 1048px; margin-right: 30px; }
.dhead { height: 75px; display: flex; align-items: center; color: #424650; }
.dhead h2 { font-size: 20.950px; color: #0f141a; margin-right: auto; padding-bottom: 2px; }
.cog { width: 20px; height: 20px; }
.dhead i { width: 1px; height: 29px; background: #c6c6cd; margin: 0 22px 0 17px; }
.dhead .chev { width: 10px; height: 18px; margin-right: 2px; }
.actions { display: flex; justify-content: flex-end; gap: 10px; }
.actions button { height: 39px; border: 2px solid #006ce0; border-radius: 20px; color: #006ce0; font-weight: 700; font-size: 16.400px; width: 108px; gap: 13px; white-space: nowrap; padding-bottom: 2px; }
.actions .dis { color: #8c8c94; border-color: #b4b4bb; width: 187px; }
.actions button:nth-child(3) { width: 189px; }
.actions button:nth-child(4) { width: 181px; }
.actions svg { width: 13px; height: 12px; margin-top: 2px; }
.tabs { height: 71px; display: grid; grid-template-columns: 46px 145px 112.500px 145px 128px 159px 140px 127px 45.500px; border-bottom: 1px solid #c6c6cd; font-size: 18.800px; color: #424650; position: relative; }
.tabs b { height: 47px; margin-top: 12px; line-height: 46px; text-align: center; border-right: 1px solid #c6c6cd; white-space: nowrap; overflow: hidden; }
.tabs .on { color: #006ce0; overflow: visible; position: relative; }
.tabs .on::after { content: ""; position: absolute; left: 1px; right: 0; top: 53px; height: 5px; border-radius: 3px; background: #006ce0; }
.tabs .cut { text-align: left; padding-left: 26px; border: 0; }
.tabs span { display: flex; align-items: center; height: 39px; margin-top: 16px; color: #8c8c94; }
.tl { padding-left: 17px; border-right: 1px solid #dedee3; width: 46px; }
.tabs .tr { padding-left: 18px; color: #424650; border-left: 1px solid #c6c6cd; box-shadow: -3px 0 4px -2px #0003; margin-left: -1px; background: #fff; }
.tabs svg { width: 10px; height: 18px; }
.card { margin-top: 20px; border: 1px solid #c6c6cd; border-bottom: 0; border-radius: 20px 20px 0 0; height: 520px; padding: 0 12px; }
.chead { height: 69px; display: flex; align-items: center; padding: 0 13px 0 13px; }
.chead h3 { font-size: 23.300px; padding-bottom: 2px; }
.kv { display: grid; grid-template-columns: 511px 1fr; padding: 11.500px 0 13.500px 12.500px; border-bottom: 1px solid #c6c6cd; line-height: 25px; white-space: nowrap; }
.kv.first { padding-top: 0; padding-bottom: 13px; }
.kv b { display: block; font-size: 16.400px; }
.kv .second { margin-top: 20px; }
.kv:last-child { border: 0; }
.link { color: #006ce0; }
.link svg { display: inline-block; vertical-align: -3px; }
.arn2 { letter-spacing: .16px; }
.arn3 { letter-spacing: .33px; }
.stamp { letter-spacing: .48px; }
.copy { width: 20px; height: 20px; margin: 0 4px 0 5px; }
.ext { width: 18px; height: 18px; margin-left: 6px; }

/* Console footer */
.foot { height: 43px; background: #161d26; border-top: 1px solid #424650; display: flex; align-items: center; flex: none; padding: 0 0 2px 20px; color: #ebebf0; font-size: 14.350px; white-space: nowrap; font-weight: 500; }
.foot svg { width: 20px; height: 20px; margin: 2px 6px 0 0; }
.f1 { width: 105px; }
.f2 { width: 1068px; }
.f3 { width: 380px; color: #c6c6cd; }
.f4 { width: 80px; }
.f5 { width: 73px; }

/* Windows taskbar */
.taskbar { height: 60px; flex: none; background: linear-gradient(#172d2f, #162c2e); border-top: 1px solid #3c5152; display: flex; align-items: center; color: #fff; }
.widget { width: 269.500px; padding-left: 26px; position: relative; }
.widget svg { width: 28px; height: 30px; margin-top: -2px; }
.badge { position: absolute; width: 20px; height: 20px; border-radius: 50%; font-size: 13px; line-height: 20px; text-align: center; color: #222; }
.pink { background: #ff99a4; left: 39px; top: -7px; }
.blue { background: #4cc2ff; right: 7px; top: 2px; }
.slot { width: 55px; height: 50px; display: flex; align-items: center; justify-content: center; position: relative; flex: none; }
.slot svg { width: 30px; height: 30px; }
.slot.dot::after, .slot.cur::after { content: ""; position: absolute; left: 24px; bottom: 1px; width: 8px; height: 4px; border-radius: 2px; background: #98a3a4; }
.slot.cur { background: #2a4041; border-radius: 6px; box-shadow: inset 0 0 0 1px #354a4b; width: 49px; margin: 0 3px; }
.slot.cur::after { left: 15px; width: 19px; background: #4cc2ff; }
.tsearch { width: 275px; height: 40px; border-radius: 20px; background: #384b4d; border: 1px solid #4c5e5f; margin: 0 2.500px 0 4.500px; display: flex; align-items: center; padding-left: 14px; font-size: 16.400px; color: #d5dada; }
.mag { width: 18px; height: 18px; margin-right: 13px; }
.scene { width: 62px; height: 30px; margin-left: auto; margin-right: 5px; }
.tray { margin-left: auto; display: flex; align-items: center; padding-right: 24px; font-size: 14.500px; line-height: 20px; }
.upc { width: 14px; height: 9px; }
.lang { width: 80px; text-align: center; padding: 0 0 2px 2px; }
.ic { width: 20px; height: 17px; margin-right: 10px; }
.wifi { margin-left: -2px; }
.clock { text-align: right; width: 88px; white-space: nowrap; padding-bottom: 4px; }
```
